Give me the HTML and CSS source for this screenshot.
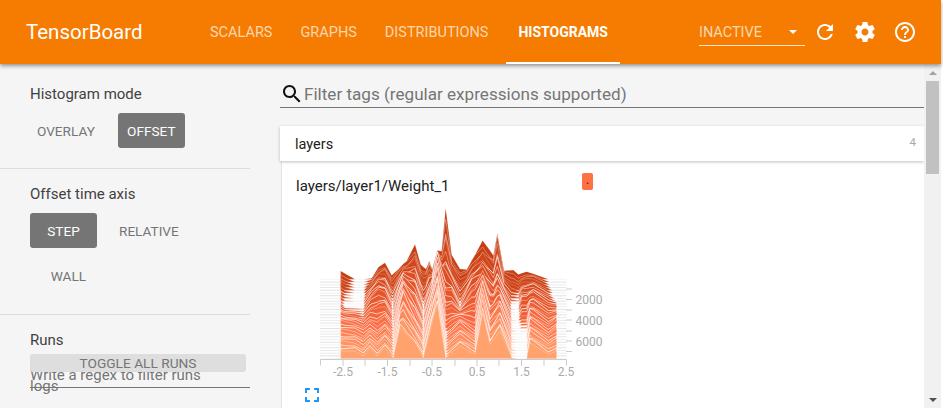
FILE: index.html
```html
<!DOCTYPE html>
<html lang="en">
<head>
    <meta charset="UTF-8">
    <title>TensorBoard</title>
    <link rel="stylesheet" href="styles.css">
</head>
<body>
    <div class="app">
        <header class="topbar">
            <div class="logo">TensorBoard</div>
            <nav class="tabs">
                <a class="tab">SCALARS</a>
                <a class="tab">GRAPHS</a>
                <a class="tab">DISTRIBUTIONS</a>
                <a class="tab active">HISTOGRAMS</a>
            </nav>
            <div class="run-select">
                <span>INACTIVE</span>
                <i class="caret"></i>
            </div>
            <div class="icon-btn">
                <svg viewBox="0 0 24 24" width="24" height="24"><path d="M17.65 6.35C16.2 4.9 14.21 4 12 4c-4.42 0-7.99 3.58-7.99 8s3.57 8 7.99 8c3.73 0 6.84-2.55 7.73-6h-2.08c-.82 2.33-3.04 4-5.65 4-3.31 0-6-2.69-6-6s2.69-6 6-6c1.66 0 3.14.69 4.22 1.78L13 11h7V4l-2.35 2.35z"/></svg>
            </div>
            <div class="icon-btn">
                <svg viewBox="0 0 24 24" width="24" height="24"><path d="M19.43 12.98c.04-.32.07-.64.07-.98s-.03-.66-.07-.98l2.11-1.65c.19-.15.24-.42.12-.64l-2-3.46c-.12-.22-.39-.3-.61-.22l-2.49 1c-.52-.4-1.08-.73-1.69-.98l-.38-2.65C14.46 2.18 14.25 2 14 2h-4c-.25 0-.46.18-.49.42l-.38 2.65c-.61.25-1.17.59-1.69.98l-2.49-1c-.23-.09-.49 0-.61.22l-2 3.46c-.13.22-.07.49.12.64l2.11 1.65c-.04.32-.07.65-.07.98s.03.66.07.98l-2.11 1.65c-.19.15-.24.42-.12.64l2 3.46c.12.22.39.3.61.22l2.49-1c.52.4 1.08.73 1.69.98l.38 2.65c.03.24.24.42.49.42h4c.25 0 .46-.18.49-.42l.38-2.65c.61-.25 1.17-.59 1.69-.98l2.49 1c.23.09.49 0 .61-.22l2-3.46c.12-.22.07-.49-.12-.64l-2.11-1.65zM12 15.5c-1.93 0-3.5-1.57-3.5-3.5s1.57-3.5 3.5-3.5 3.5 1.57 3.5 3.5-1.57 3.5-3.5 3.5z"/></svg>
            </div>
            <div class="icon-btn">
                <svg viewBox="0 0 24 24" width="24" height="24"><path d="M11 18h2v-2h-2v2zm1-16C6.48 2 2 6.48 2 12s4.48 10 10 10 10-4.48 10-10S17.52 2 12 2zm0 18c-4.41 0-8-3.59-8-8s3.59-8 8-8 8 3.59 8 8-3.59 8-8 8zm0-14c-2.21 0-4 1.79-4 4h2c0-1.1.9-2 2-2s2 .9 2 2c0 2-3 1.75-3 5h2c0-2.25 3-2.5 3-5 0-2.21-1.79-4-4-4z"/></svg>
            </div>
        </header>

        <div class="content">
            <aside class="sidebar">
                <section class="side-section mode-section">
                    <div class="side-title">Histogram mode</div>
                    <div class="options">
                        <span class="opt opt-overlay">OVERLAY</span>
                        <span class="opt selected">OFFSET</span>
                    </div>
                </section>
                <section class="side-section axis-section">
                    <div class="side-title">Offset time axis</div>
                    <div class="options">
                        <span class="opt selected">STEP</span>
                        <span class="opt">RELATIVE</span>
                        <span class="opt opt-wall">WALL</span>
                    </div>
                </section>
                <section class="runs-section">
                    <div class="side-title">Runs</div>
                    <div class="toggle-runs">TOGGLE ALL RUNS</div>
                    <div class="regex">Write a regex to filter runs</div>
                    <div class="run-name">logs</div>
                </section>
            </aside>

            <main class="main">
                <div class="filter">
                    <svg viewBox="0 0 24 24" width="24" height="24"><path d="M15.5 14h-.79l-.28-.27C15.41 12.59 16 11.11 16 9.5 16 5.91 13.09 3 9.5 3S3 5.91 3 9.5 5.91 16 9.5 16c1.61 0 3.09-.59 4.23-1.57l.27.28v.79l5 4.99L20.49 19l-4.99-5zm-6 0C7.01 14 5 11.99 5 9.5S7.01 5 9.5 5 14 7.01 14 9.5 11.99 14 9.5 14z"/></svg>
                    <span>Filter tags (regular expressions supported)</span>
                </div>
                <div class="category">
                    <span>layers</span>
                    <span class="count">4</span>
                </div>
                <div class="card-body">
                    <div class="card-title">
                        <span>layers/layer1/Weight_1</span>
                        <span class="run-tag">.</span>
                    </div>
                    <svg class="chart" viewBox="0 0 320 180" width="320" height="180">
                        <g id="layers" transform="scale(0.33333)"></g>
                        <g class="axis">
                            <path d="M20.5 165.5V159.5H266.5V165.5"/>
                            <path d="M43 160v6M65 160v6M87.5 160v6M110 160v6M132 160v6M155 160v6M177 160v6M199 160v6M221.500 160v6M244 160v6"/>
                            <path d="M266 89h6M266 99.500h6M266 110h6M266 120h6M266 131h6M266 141h6M266 151.500h6"/>
                        </g>
                        <g class="tick-labels">
                            <text x="43" y="175.500" text-anchor="middle">-2.5</text>
                            <text x="87.500" y="175.500" text-anchor="middle">-1.5</text>
                            <text x="132" y="175.500" text-anchor="middle">-0.5</text>
                            <text x="177" y="175.500" text-anchor="middle">0.5</text>
                            <text x="221.500" y="175.500" text-anchor="middle">1.5</text>
                            <text x="266" y="175.500" text-anchor="middle">2.5</text>
                            <text x="275.500" y="103.500">2000</text>
                            <text x="275.500" y="124.500">4000</text>
                            <text x="275.500" y="145.500">6000</text>
                        </g>
                    </svg>
                    <svg class="expand" viewBox="0 0 24 24" width="24" height="24"><path d="M7 14H5v5h5v-2H7v-3zm-2-4h2V7h3V5H5v5zm12 7h-3v2h5v-5h-2v3zM14 5v2h3v3h2V5h-5z"/></svg>
                </div>
            </main>

            <div class="scrollbar">
                <div class="arrow-box"><i class="arrow-up"></i></div>
                <div class="thumb"></div>
                <div class="track"></div>
                <div class="arrow-box"><i class="arrow-down"></i></div>
            </div>
        </div>
    </div>
    <script src="chart.js"></script>
</body>
</html>
```

FILE: styles.css
```css
html, body {
    margin: 0;
    height: 100%;
    overflow: hidden;
    background-color: #fff;
}
body {
    font-family: Roboto, "Noto Sans", sans-serif;
    color: #212121;
}
.app {
    width: 941px;
    height: 408px;
    display: flex;
    flex-direction: column;
    background-color: #f5f5f5;
}
.topbar {
    height: 64px;
    flex: none;
    display: flex;
    align-items: center;
    padding: 0 16px 0 26px;
    background-color: #f57c00;
    color: #fff;
    box-shadow: 0 2px 4px rgba(0, 0, 0, 0.4);
    position: relative;
    z-index: 2;
}
.logo {
    width: 172px;
    font-size: 20.500px;
}
.tabs {
    display: flex;
    gap: 4px;
    height: 64px;
}
.tab {
    display: flex;
    align-items: center;
    padding: 2px 12px 0;
    font-size: 14.500px;
    color: rgba(255, 255, 255, 0.7);
    border-bottom: 2px solid transparent;
    box-sizing: border-box;
}
.tab.active {
    margin-left: 2px;
    color: #fff;
    font-weight: 700;
    font-size: 14px;
    border-bottom-color: #fff;
}
.run-select {
    width: 106px;
    height: 27px;
    margin: 1px 0 0 79px;
    display: flex;
    align-items: center;
    justify-content: space-between;
    box-sizing: border-box;
    padding-right: 8px;
    border-bottom: 1px solid rgba(255, 255, 255, 0.8);
    font-size: 14.500px;
    color: rgba(255, 255, 255, 0.7);
}
.caret {
    width: 0;
    height: 0;
    border-left: 4.500px solid transparent;
    border-right: 4.500px solid transparent;
    border-top: 4.500px solid #fff;
}
.icon-btn {
    width: 40px;
    height: 40px;
    display: flex;
    align-items: center;
    justify-content: center;
}
.icon-btn svg {
    fill: #fff;
}
.content {
    flex: 1;
    display: flex;
    min-height: 0;
}
.sidebar {
    width: 250px;
    flex: none;
    overflow: hidden;
    font-size: 15px;
}
.side-section {
    box-sizing: border-box;
    padding-left: 30px;
    border-bottom: 1px solid #ddd;
}
.mode-section {
    height: 105px;
    padding-top: 20px;
}
.axis-section {
    height: 146px;
    padding-top: 15px;
}
.side-title {
    line-height: 20px;
    color: #424242;
}
.options {
    display: flex;
    flex-wrap: wrap;
    gap: 10px 15px;
    margin-top: 9px;
}
.opt {
    min-width: 53px;
    height: 35px;
    padding: 0 7px;
    display: flex;
    align-items: center;
    justify-content: center;
    font-size: 13.600px;
    color: #757575;
    border-radius: 3px;
}
.opt.selected {
    background-color: #757575;
    color: #fff;
}
.opt-overlay {
    margin-right: 1px;
}
.opt-wall {
    margin-left: 5px;
}
.runs-section {
    padding: 15px 0 0 30px;
}
.toggle-runs {
    width: 216px;
    height: 18px;
    margin-top: 4px;
    line-height: 18px;
    text-align: center;
    font-size: 13.700px;
    color: #757575;
    background-color: #dedede;
    border-radius: 3px;
    position: relative;
}
.regex {
    margin-top: -7px;
    height: 22px;
    line-height: 20px;
    color: #757575;
    border-bottom: 1px solid #757575;
}
.run-name {
    margin-top: -11px;
    line-height: 18px;
    color: #757575;
}
.main {
    flex: 1;
    min-width: 0;
    padding: 18px 0 0 30px;
    overflow: hidden;
}
.filter {
    height: 26px;
    display: flex;
    align-items: center;
    box-sizing: border-box;
    padding-bottom: 1px;
    border-bottom: 1px solid #757575;
    font-size: 17.100px;
    color: #757575;
}
.filter svg {
    flex: none;
    fill: #111;
}
.category {
    height: 35px;
    margin-top: 18px;
    padding: 1px 8px 0 15px;
    box-sizing: border-box;
    display: flex;
    align-items: center;
    justify-content: space-between;
    background-color: #fff;
    font-size: 14.500px;
    box-shadow: 0 1px 3px rgba(0, 0, 0, 0.25);
    position: relative;
}
.count {
    font-size: 11.500px;
    color: #aaa;
    margin-bottom: 4px;
}
.card-body {
    height: 260px;
    margin-left: 1px;
    padding: 12px 0 0 14px;
    background-color: #fff;
    border-left: 1px solid #e4e4e4;
    box-sizing: border-box;
}
.card-title {
    width: 297px;
    height: 27px;
    display: flex;
    justify-content: space-between;
    font-size: 15px;
    line-height: 26px;
}
.run-tag {
    width: 11px;
    height: 17px;
    background-color: #ff7043;
    border-radius: 2px;
    text-align: center;
    font-size: 12px;
    line-height: 15px;
}
.chart {
    display: block;
    margin-left: 4px;
}
.axis path {
    fill: none;
    stroke: #ccc;
    stroke-width: 1;
}
.tick-labels text {
    font-size: 12px;
    fill: #aaa;
}
.expand {
    display: block;
    margin: 3px 0 0 4px;
    fill: #2196f3;
}
.scrollbar {
    width: 17px;
    flex: none;
    display: flex;
    flex-direction: column;
    background-color: #f1f1f1;
}
.arrow-box {
    height: 17px;
    flex: none;
    display: flex;
    align-items: center;
    justify-content: center;
}
.arrow-up, .arrow-down {
    width: 0;
    height: 0;
    border-left: 4px solid transparent;
    border-right: 4px solid transparent;
}
.arrow-up {
    border-bottom: 4px solid #a3a3a3;
}
.arrow-down {
    border-top: 4px solid #505050;
}
.thumb {
    height: 93px;
    margin: 0 2px;
    background-color: #c1c1c1;
}
.track {
    flex: 1;
}
```

FILE: chart.js
```js
// ridge plot, coordinates are 3x the page pixels
const back = [[122,23],[165,0],[192,0],[215,3],[235,33],[255,48],[275,13],[300,38],[320,53],[345,96],[362,43],[378,33],[388,60],[397,33],[412,80],[425,83],[437,196],[455,68],[480,33],[500,33],[515,58],[548,106],[580,73],[592,151],[612,28],[640,26],[655,13],[680,23],[700,18],[745,0],[770,0]];
const quarter = [[122,10],[135,0],[190,0],[215,40],[235,62],[255,52],[278,0],[310,90],[345,78],[370,0],[395,62],[412,150],[437,62],[455,58],[480,0],[500,40],[515,70],[548,100],[580,55],[592,80],[612,42],[635,0],[655,0],[665,30],[680,30],[700,42],[745,14],[770,6]];
const mid = [[122,32],[165,24],[190,12],[210,28],[232,12],[255,32],[280,2],[310,122],[345,52],[370,2],[412,152],[437,2],[480,42],[525,8],[548,142],[570,50],[600,92],[635,2],[650,0],[680,0],[690,52],[745,14],[770,36]];
const front = [[122,23],[165,23],[190,8],[210,33],[232,8],[255,33],[280,3],[300,93],[345,48],[370,3],[412,168],[437,3],[480,38],[525,13],[548,138],[570,43],[600,83],[635,3],[650,0],[680,0],[690,48],[745,13],[770,23]];
const profiles = [back, quarter, mid, front];

const xs = [...new Set(profiles.flat().map(p => p[0]))].sort((a, b) => a - b);

function heightAt(profile, x) {
    for (let i = 1; i < profile.length; i++) {
        if (x <= profile[i][0]) {
            const [x0, y0] = profile[i - 1];
            const [x1, y1] = profile[i];
            return y0 + (y1 - y0) * (x - x0) / (x1 - x0);
        }
    }
    return 0;
}

function layerHeight(x, t) {
    const pos = Math.min(t * 3, 2.999);
    const n = Math.floor(pos);
    const a = heightAt(profiles[n], x);
    const b = heightAt(profiles[n + 1], x);
    return a + (b - a) * (pos - n);
}

function mix(a, b, k) {
    return a.map((v, i) => Math.round(v + (b[i] - v) * k));
}

function layerColor(t) {
    const stops = [[198, 62, 18], [226, 80, 36], [255, 112, 70], [255, 162, 110]];
    const pos = Math.min(t * 3, 2.999);
    const n = Math.floor(pos);
    return "rgb(" + mix(stops[n], stops[n + 1], pos - n).join(",") + ")";
}

const NS = "http://www.w3.org/2000/svg";
const group = document.getElementById("layers");
const COUNT = 30;

for (let i = 0; i < COUNT; i++) {
    const base = 238 + i / (COUNT - 1) * 238;
    const line = document.createElementNS(NS, "path");
    line.setAttribute("d", `M60 ${base}H800`);
    line.setAttribute("stroke", `rgba(0,0,0,${0.05 + 0.07 * Math.abs(Math.sin(i * 1.3))})`);
    line.setAttribute("stroke-width", "3");
    group.appendChild(line);
}

for (let i = 0; i < COUNT; i++) {
    const t = i / (COUNT - 1);
    const base = 238 + t * 238;
    const endX = t < 0.3 ? 745 + t / 0.3 * 25 : 770;
    const points = xs.filter(x => x <= endX).map(x => {
        const wobble = i === COUNT - 1 ? 1 : 1 + 0.1 * Math.sin(i * 1.7 + x * 0.06);
        return `${x},${(base - layerHeight(x, t) * wobble).toFixed(1)}`;
    });
    let alpha = 0.35 + 0.6 * Math.abs(Math.sin(i * 2.3));
    if (t < 0.2) alpha *= 0.5;
    if (i === COUNT - 1) alpha = 0.3;
    const shape = document.createElementNS(NS, "polygon");
    shape.setAttribute("points", `122,${base} ${points.join(" ")} ${endX},${base}`);
    shape.setAttribute("fill", layerColor(t));
    shape.setAttribute("stroke", `rgba(255,255,255,${alpha.toFixed(2)})`);
    shape.setAttribute("stroke-width", "2.4");
    group.appendChild(shape);
}
```
